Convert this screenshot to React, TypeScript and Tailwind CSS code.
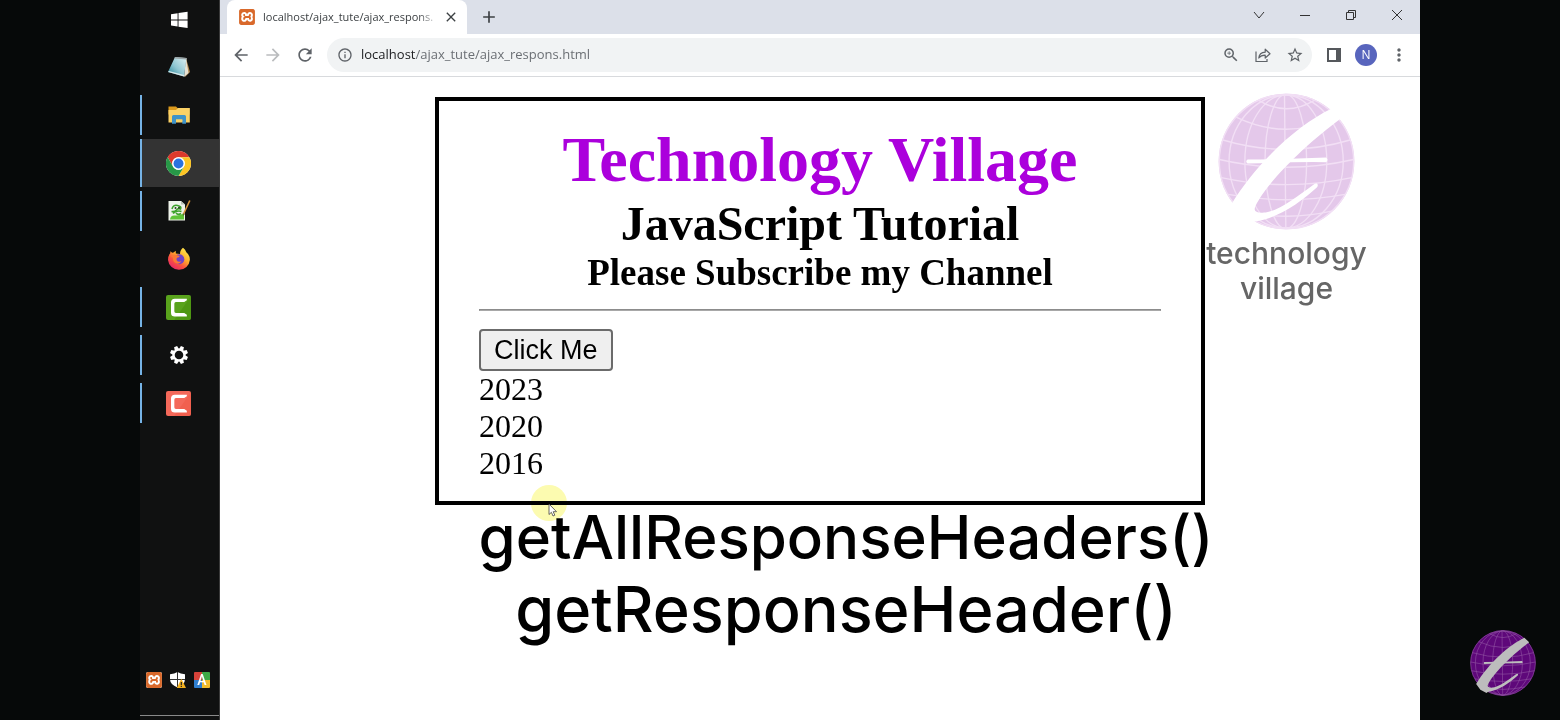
import React from "react";
import {
  MdArrowBack,
  MdArrowForward,
  MdClose,
  MdInfoOutline,
  MdMoreVert,
  MdRefresh,
  MdStarBorder,
  MdZoomIn,
  MdAdd,
} from "react-icons/md";
import { SiXampp } from "react-icons/si";

function XamppIcon() {
  return (
    <span className="flex size-4 shrink-0 overflow-hidden rounded-[2px] bg-white text-[#d9692b]">
      <SiXampp className="size-4" />
    </span>
  );
}

function WindowsIcon() {
  return (
    <svg viewBox="0 0 18 18" className="size-[18px]" fill="#fff">
      <path d="M1 3.2 7.6 2.2V8.4H1zM8.5 2.1 17.6.8V8.4H8.5zM1 9.4H7.6V15.6L1 14.6zM8.5 9.4H17.6V17L8.5 15.7z" />
    </svg>
  );
}

function NotepadIcon() {
  return (
    <svg viewBox="0 0 24 24" className="size-6">
      <defs>
        <linearGradient id="note" x1="0" y1="1" x2="1" y2="0">
          <stop offset="0" stopColor="#1f7f92" />
          <stop offset=".45" stopColor="#8fc6d2" />
          <stop offset="1" stopColor="#e3f3f4" />
        </linearGradient>
      </defs>
      <path d="M19 3 23 17 18 22Z" fill="#b08a52" />
      <path d="M19 3 21.500 18 17 22Z" fill="#e8e2d4" />
      <path d="M8 2 19.500 3 17 21.500 1 17Z" fill="url(#note)" />
      <path d="M1 17 17 21.500 17.200 20 2 16Z" fill="#d9e8ea" />
      <path d="M8 2 19.500 3 19.300 4.500 7.500 3.400Z" fill="#9aa4a6" />
    </svg>
  );
}

function FolderIcon() {
  return (
    <svg viewBox="0 0 24 24" className="size-6">
      <path d="M1.500 3.500H9l2 2h11.500v6h-21z" fill="#dc9a1c" />
      <path d="M1.500 7H9L11 5H22.800V19.500H1.500Z" fill="#fbd266" />
      <path d="M5 20.800V13.500Q5 12 6.500 12H17.500Q19 12 19 13.500V20.800H15.300V16.500H9V20.800Z" fill="#3f93c8" />
      <path d="M9 16.500H15.300V18.500H9Z" fill="#fbd266" />
    </svg>
  );
}

function ChromeIcon() {
  return (
    <svg viewBox="0 0 48 48" className="size-[25px]">
      <circle cx="24" cy="24" r="24" fill="#fff" />
      <path d="M3.200 12A24 24 0 0 1 44.800 12H24A12 12 0 0 0 13.600 30Z" fill="#dc3a2c" />
      <path d="M44.800 12A24 24 0 0 1 24 48L34.400 30A12 12 0 0 0 24 12Z" fill="#fcc524" />
      <path d="M24 48A24 24 0 0 1 3.200 12L13.600 30A12 12 0 0 0 34.400 30Z" fill="#279847" />
      <circle cx="24" cy="24" r="12" fill="#fff" />
      <circle cx="24" cy="24" r="9.500" fill="#2a72e0" />
    </svg>
  );
}

function NotepadPlusIcon() {
  return (
    <svg viewBox="0 0 24 24" className="size-6">
      <path d="M1.500 2H14L18 5.500V21.500H1.500Z" fill="#eef3ea" />
      <path d="M14 2V5.500H18Z" fill="#b9c2b5" />
      <path d="M3 20.500Q3.500 16 8 16.500T17 14V20.500Z" fill="#5fc437" />
      <path d="M5 10Q6 5.500 10.500 6.500T13.500 10Q11 9 9.500 11T4.500 12.500M6 14.500Q10 11 14.500 12.500M9 14Q11 16.500 14 14.500" stroke="#3da32b" strokeWidth="1.600" fill="none" />
      <circle cx="8.500" cy="9" r="1" fill="#27401f" />
      <circle cx="12" cy="8.800" r="1" fill="#27401f" />
      <path d="M22.800 1.500 16.500 15" stroke="#d7953b" strokeWidth="1.600" />
      <path d="M16.800 14 15.600 17.200 18 15Z" fill="#5e4a30" />
    </svg>
  );
}

function FirefoxIcon() {
  return (
    <svg viewBox="0 0 24 24" className="size-6">
      <defs>
        <linearGradient id="fox" x1=".85" y1=".1" x2=".2" y2="1">
          <stop offset="0" stopColor="#ffe34a" />
          <stop offset=".35" stopColor="#ffae2b" />
          <stop offset=".65" stopColor="#fb5140" />
          <stop offset="1" stopColor="#e3216e" />
        </linearGradient>
      </defs>
      <path d="M16 .8Q18.500 2.500 19.300 5.200 22.800 8 22.900 12.800A11 11 0 0 1 1 13Q1 8.800 3.200 6.200L3.400 4.200 5.200 5.700 6.500 5.500 8.800 3.800V6.500L13 7Q13 3 16 .8Z" fill="url(#fox)" />
      <circle cx="12.300" cy="12.200" r="5" fill="#7243c6" />
      <path d="M4 9.500Q6.500 7 10 8.300L12.800 9Q12.300 10.500 10 10.800 9 11.800 9.800 13.400 11.500 15.500 14.500 14 12.500 17.800 8.800 16.200 5.500 14.500 6 10.500Z" fill="#fb7a35" />
    </svg>
  );
}

function CamtasiaIcon({ tone }: { tone: "green" | "red" }) {
  return (
    <svg viewBox="0 0 24 24" className="size-[25px]">
      <rect width="24" height="24" rx="2" fill={tone === "green" ? "#59a31c" : "#f4695a"} />
      <path d="M24 1V22Q24 24 22 24H8Z" fill={tone === "green" ? "#47900e" : "#ef5a48"} opacity=".6" />
      <path d="M20 3.500V5L17.500 6.800H9.500Q8 6.800 8 8.300V15.700Q8 17.200 9.500 17.200H17.500L20 19V20.700H8.500Q4.800 20.700 4.800 17V7.200Q4.800 3.500 8.500 3.500Z" fill="#fff" />
    </svg>
  );
}

function GearIcon() {
  const teeth = [0, 45, 90, 135, 180, 225, 270, 315];
  return (
    <svg viewBox="-10 -10 20 20" className="size-5">
      {teeth.map((a) => (
        <path key={a} d="M-2.200 -5.500 -1.600 -9H1.600L2.200 -5.500Z" fill="#fff" transform={`rotate(${a + 22.5})`} />
      ))}
      <circle r="5.400" fill="none" stroke="#fff" strokeWidth="2.200" />
    </svg>
  );
}

function ShieldIcon() {
  return (
    <svg viewBox="0 0 16 16" className="size-4">
      <path d="M7.500 0Q10.500 2 15 2.200V7Q15 12.500 7.500 15.500 0 12.500 0 7V2.200Q4.500 2 7.500 0Z" fill="#fff" />
      <path d="M7.500 0V15.500M0 7.500H15" stroke="#333" strokeWidth="1" />
      <path d="M11.300 6.800 16 16H6.800Z" fill="#f2b01e" />
      <path d="M11.300 10V13M11.300 13.800V15" stroke="#222" strokeWidth="1.200" />
    </svg>
  );
}

function LanguageIcon() {
  return (
    <span className="grid size-4 grid-cols-2 grid-rows-2 overflow-hidden rounded-[1px]">
      <span className="bg-[#d8433a]" />
      <span className="bg-[#3faa46]" />
      <span className="bg-[#2f7fd0]" />
      <span className="bg-[#efbb2c]" />
      <span className="col-span-2 -mt-4 text-center font-['Roboto',sans-serif] text-sm leading-4 font-medium text-white">A</span>
    </span>
  );
}

function Globe({ fill, line, mark, className }: { fill: string; line: string; mark: string; className: string }) {
  const parallels = [
    [62, 112],
    [112, 184],
    [180, 236],
    [238, 284],
    [292, 334],
    [342, 374],
    [392, 422],
  ];
  return (
    <svg viewBox="66 40 408 408" className={className} aria-hidden="true">
      <circle cx="270" cy="244" r="202" fill={fill} />
      <g fill="none" stroke={line} strokeWidth="4">
        <circle cx="270" cy="244" r="200" />
        <path d="M264 44 268 444" />
        <ellipse cx="268" cy="244" rx="62" ry="200" />
        <ellipse cx="268" cy="244" rx="122" ry="198" />
        <ellipse cx="269" cy="244" rx="170" ry="198" />
        {parallels.map(([edge, dip]) => {
          const half = Math.sqrt(200 * 200 - (edge - 244) * (edge - 244));
          return <path key={edge} d={`M${270 - half} ${edge}Q270 ${dip} ${270 + half} ${edge}`} />;
        })}
      </g>
      <g fill={mark}>
        <path d="M402 88C310 132 185 240 104 374L130 410 168 430 176 423C245 412 310 368 361 321C367 311 360 306 350 313C300 350 250 388 208 396C180 398 170 392 178 376C208 310 330 190 432 116Z" />
        <path d="M154 238Q270 237 388 232 396 239 388 246 270 245 154 250 146 244 154 238Z" />
      </g>
    </svg>
  );
}

function ShareIcon() {
  return (
    <svg viewBox="0 0 16 16" className="size-4" fill="none" stroke="#5f6368" strokeWidth="1.200">
      <path d="M1 4.500V14.500H12V12" />
      <path d="M3.800 11Q4.300 5.500 10.200 5.200V2.200L15 6.800 10.200 11V8.200Q5.800 8.200 3.800 11Z" strokeLinejoin="round" />
    </svg>
  );
}

const apps = [
  { name: "Notepad", icon: <NotepadIcon />, state: "idle" },
  { name: "File Explorer", icon: <FolderIcon />, state: "open" },
  { name: "Google Chrome", icon: <ChromeIcon />, state: "active" },
  { name: "Notepad++", icon: <NotepadPlusIcon />, state: "open" },
  { name: "Firefox", icon: <FirefoxIcon />, state: "idle" },
  { name: "Camtasia", icon: <CamtasiaIcon tone="green" />, state: "open" },
  { name: "Settings", icon: <GearIcon />, state: "open" },
  { name: "Camtasia Recorder", icon: <CamtasiaIcon tone="red" />, state: "open" },
];

function Taskbar() {
  return (
    <nav className="flex w-20 shrink-0 flex-col border-r border-[#3a3a3a] bg-[#101111]">
      <button aria-label="Start" className="mb-[3px] flex h-10 items-center justify-center pr-[2px]">
        <WindowsIcon />
      </button>
      {apps.map((app) => (
        <button
          key={app.name}
          aria-label={app.name}
          className={`flex h-12 items-center ${app.state === "active" ? "bg-[#333]" : ""}`}
        >
          <span
            className={`w-[2px] ${app.state === "active" ? "h-full bg-[#76b3e6]" : app.state === "open" ? "h-10 bg-[#76b3e6]" : ""}`}
          />
          <span className="flex flex-1 justify-center pr-1">{app.icon}</span>
        </button>
      ))}
      <div className="mt-auto mb-1 flex h-11 justify-center gap-2 border-b border-[#8a8a8a] pr-[3px]">
        <XamppIcon />
        <ShieldIcon />
        <LanguageIcon />
      </div>
    </nav>
  );
}

function TabStrip() {
  return (
    <div className="flex h-[34px] bg-[#dce0e9] pl-[7px] text-[#3c4043]">
      <div className="flex w-60 items-center rounded-t-lg bg-white pr-2 pl-3">
        <XamppIcon />
        <span className="ml-2 flex-1 [mask-image:linear-gradient(to_right,black_88%,transparent)] text-[11px] whitespace-nowrap text-[#3c4043]">
          localhost/ajax_tute/ajax_respons.
        </span>
        <button aria-label="Close tab" className="ml-1">
          <MdClose className="size-4" />
        </button>
      </div>
      <button aria-label="New tab" className="ml-3">
        <MdAdd className="size-5" />
      </button>
      <div className="ml-auto flex items-center pb-1 text-[#333]">
        <button aria-label="Search tabs" className="flex w-[46px] justify-center">
          <svg viewBox="0 0 12 12" className="size-3" fill="none" stroke="currentColor">
            <path d="M1 3 6 9 11 3" />
          </svg>
        </button>
        <button aria-label="Minimize" className="flex w-[46px] justify-center">
          <svg viewBox="0 0 12 12" className="size-3" fill="none" stroke="currentColor">
            <path d="M1 6.500H11" />
          </svg>
        </button>
        <button aria-label="Restore" className="flex w-[46px] justify-center">
          <svg viewBox="0 0 12 12" className="size-3" fill="none" stroke="currentColor">
            <path d="M1.500 3.500H8.500V10.500H1.500ZM3.500 3.500V1.500H10.500V8.500H8.500" />
          </svg>
        </button>
        <button aria-label="Close" className="flex w-[46px] justify-center">
          <svg viewBox="0 0 12 12" className="size-3" fill="none" stroke="currentColor">
            <path d="M1 1 11 11M11 1 1 11" />
          </svg>
        </button>
      </div>
    </div>
  );
}

function AddressBar() {
  return (
    <div className="flex h-[43px] items-center border-b border-[#d8dadd] bg-white px-[11px] text-[#5f6368]">
      <button aria-label="Back" className="mr-3">
        <MdArrowBack className="size-5" />
      </button>
      <button aria-label="Forward" className="mr-3 text-[#babcbe]">
        <MdArrowForward className="size-5" />
      </button>
      <button aria-label="Reload" className="mr-3">
        <MdRefresh className="size-5" />
      </button>
      <div className="flex h-[34px] flex-1 items-center rounded-full bg-[#f1f3f4] pr-2 pl-[10px]">
        <MdInfoOutline className="size-4" />
        <a href="#page" className="ml-2 flex-1 text-[13px] text-[#6b6f74]">
          <span className="text-[#202124]">localhost</span>/ajax_tute/ajax_respons.html
        </a>
        <div className="flex items-center gap-[15px]">
          <button aria-label="Zoom">
            <MdZoomIn className="size-[18px]" />
          </button>
          <button aria-label="Share">
            <ShareIcon />
          </button>
          <button aria-label="Bookmark">
            <MdStarBorder className="size-[18px]" />
          </button>
        </div>
      </div>
      <button aria-label="Side panel" className="ml-[15px]">
        <svg viewBox="0 0 14 14" className="size-[14px]">
          <path d="M1 1H13V13H1Z" fill="none" stroke="#55585c" strokeWidth="2" />
          <path d="M9 0H14V14H9Z" fill="#55585c" />
        </svg>
      </button>
      <button
        aria-label="Profile"
        className="ml-[14px] flex size-[22px] items-center justify-center rounded-full bg-[#5865bd] text-xs text-white"
      >
        N
      </button>
      <button aria-label="Menu" className="ml-3">
        <MdMoreVert className="size-5" />
      </button>
    </div>
  );
}

function Pointer() {
  return (
    <div className="pointer-events-none absolute -bottom-5 left-[92px] size-9" aria-hidden="true">
      <div className="size-9 rounded-full bg-[#fcfbb0] mix-blend-multiply" />
      <svg viewBox="0 0 10 14" className="absolute top-[18px] left-[17px] h-[14px] w-[10px]">
        <path d="M1 1V11.500L3.400 9.300 5 13 6.800 12.200 5.200 8.700H8.500Z" fill="#fff" stroke="#444" strokeWidth=".8" />
      </svg>
    </div>
  );
}

function Page() {
  return (
    <main id="page" className="flex-1 bg-white pt-4 text-black">
      <div className="grid grid-cols-[1fr_minmax(0,770px)_1fr] items-start">
        <section className="relative col-start-2 mt-1 border-4 border-black px-10 pt-[22px] pb-[19px] font-['Liberation_Serif',serif]">
          <header className="text-center font-bold">
            <h1 className="text-[64px] leading-[74px] text-[#ab00dc]">Technology Village</h1>
            <h2 className="text-5xl leading-[54px]">JavaScript Tutorial</h2>
            <h3 className="text-[37px] leading-[44px]">Please Subscribe my Channel</h3>
          </header>
          <hr className="mt-[14px] mb-[18px] border border-[#8c8c8c] border-b-[#a8a8a8]" />
          <button className="block h-[42px] rounded-[4px] border-2 border-[#6b6b6b] bg-[#efefef] px-[13px] font-['Liberation_Sans',sans-serif] text-[27px] leading-[38px]">
            Click Me
          </button>
          <div className="text-[32px] leading-[37px]">
            <p>2023</p>
            <p>2020</p>
            <p>2016</p>
          </div>
          <Pointer />
        </section>
        <aside className="flex w-[163px] flex-col items-center font-['Inter',sans-serif] font-medium text-[#666]">
          <Globe fill="#e4c8ea" line="#f2dff5" mark="#fff" className="size-[137px]" />
          <p className="mt-[6px] text-center text-[30px] leading-[35px]">
            technology
            <br />
            village
          </p>
        </aside>
      </div>
      <div className="flex flex-col gap-2 pl-[52px] text-center font-['Inter',sans-serif] leading-[64px] font-medium">
        <p className="text-[60px] leading-[64px]">getAllResponseHeaders()</p>
        <p className="text-[63px] leading-[64px]">getResponseHeader()</p>
      </div>
    </main>
  );
}

export default function App() {
  return (
    <div className="flex min-h-screen bg-[#060909]">
      <div className="w-[140px] shrink-0" />
      <Taskbar />
      <div className="flex min-w-0 flex-1 flex-col font-['Open_Sans',sans-serif]">
        <TabStrip />
        <AddressBar />
        <Page />
      </div>
      <div className="flex w-[140px] shrink-0 items-end justify-end p-6">
        <Globe fill="#5e087a" line="#8d4fa0" mark="#bdbdbd" className="size-[66px]" />
      </div>
    </div>
  );
}
